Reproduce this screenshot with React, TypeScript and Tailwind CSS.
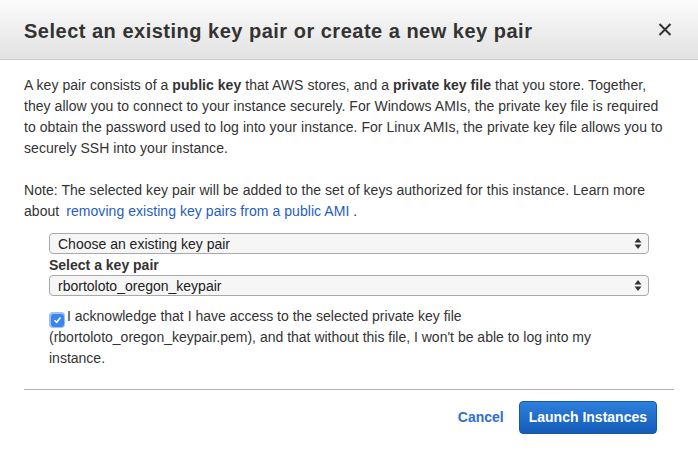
import React from "react";

function SelectArrows() {
  return (
    <svg width="8" height="13" viewBox="0 0 8 13" className="shrink-0">
      <path d="M4 1 L7.5 5.5 H0.5 Z" fill="#333" />
      <path d="M4 12 L7.5 7.5 H0.5 Z" fill="#333" />
    </svg>
  );
}

function FakeSelect({ value }: { value: string }) {
  return (
    <div className="flex h-[21px] items-center justify-between rounded-[4px] border border-[#a9a9a9] bg-[#f6f6f6] pl-[8px] pr-[6px] text-[14px] leading-none text-[#222]">
      <span>{value}</span>
      <SelectArrows />
    </div>
  );
}

export default function App() {
  return (
    <div
      className="h-[452px] w-[698px] bg-white text-[#333]"
      style={{ fontFamily: '"Liberation Sans", Arial, sans-serif' }}
    >
      {/* header */}
      <div className="flex h-[60px] items-center justify-between border-b border-[#cdcdcd] bg-gradient-to-b from-[#fbfbfb] to-[#e2e2e2] pl-[24px] pr-[26px]">
        <h1 className="pt-[2px] text-[20px] font-bold tracking-[0.5px] text-[#333]">
          Select an existing key pair or create a new key pair
        </h1>
        <svg width="14" height="13" viewBox="0 0 14 13">
          <path d="M1.5 1 L12.5 12 M12.5 1 L1.5 12" stroke="#333" strokeWidth="2" />
        </svg>
      </div>

      {/* body */}
      <div className="px-[24px] pt-[15px] text-[14px] leading-[21px]">
        <p className="tracking-[0.05px]">
          A key pair consists of a <b>public key</b> that AWS stores, and a <b>private key file</b> that you store. Together,
          <br />
          they allow you to connect to your instance securely. For Windows AMIs, the private key file is required
          <br />
          to obtain the password used to log into your instance. For Linux AMIs, the private key file allows you to
          <br />
          securely SSH into your instance.
        </p>
        <p className="mt-[21px] tracking-[0.05px]">
          Note: The selected key pair will be added to the set of keys authorized for this instance. Learn more
          <br />
          about <span className="ml-[3px] text-[#1f5dc3]">removing existing key pairs from a public AMI</span> .
        </p>

        <div className="mx-[25px] mt-[11px] flex flex-col">
          <FakeSelect value="Choose an existing key pair" />
          <div className="mt-[1px] h-[20px] font-bold leading-[20px]">Select a key pair</div>
          <FakeSelect value="rbortoloto_oregon_keypair" />

          <p className="mt-[10px]">
            <span className="relative top-[3px] mr-[2px] inline-flex h-[16px] w-[16px] items-center justify-center rounded-[4px] bg-[#9cc1f5]">
              <span className="flex h-[13px] w-[13px] items-center justify-center rounded-[3px] bg-[#3a86ee]">
                <svg width="9" height="8" viewBox="0 0 9 8">
                  <path d="M1.5 4.2 L3.6 6.3 L7.5 1.5" stroke="white" strokeWidth="1.6" fill="none" />
                </svg>
              </span>
            </span>
            I acknowledge that I have access to the selected private key file
            <br />
            (rbortoloto_oregon_keypair.pem), and that without this file, I won't be able to log into my
            <br />
            instance.
          </p>
        </div>

        <div className="mt-[20px] h-px bg-[#b5b5b5]" />

        <div className="mt-[11px] flex items-center justify-end gap-[15px] pr-[17px]">
          <span className="text-[14px] font-bold text-[#2f6ed3]">Cancel</span>
          <button className="h-[33px] rounded-[4px] border border-[#1458b0] bg-gradient-to-b from-[#2e7fdc] to-[#135cb8] px-[9px] text-[14px] font-bold text-white">
            Launch Instances
          </button>
        </div>
      </div>
    </div>
  );
}
